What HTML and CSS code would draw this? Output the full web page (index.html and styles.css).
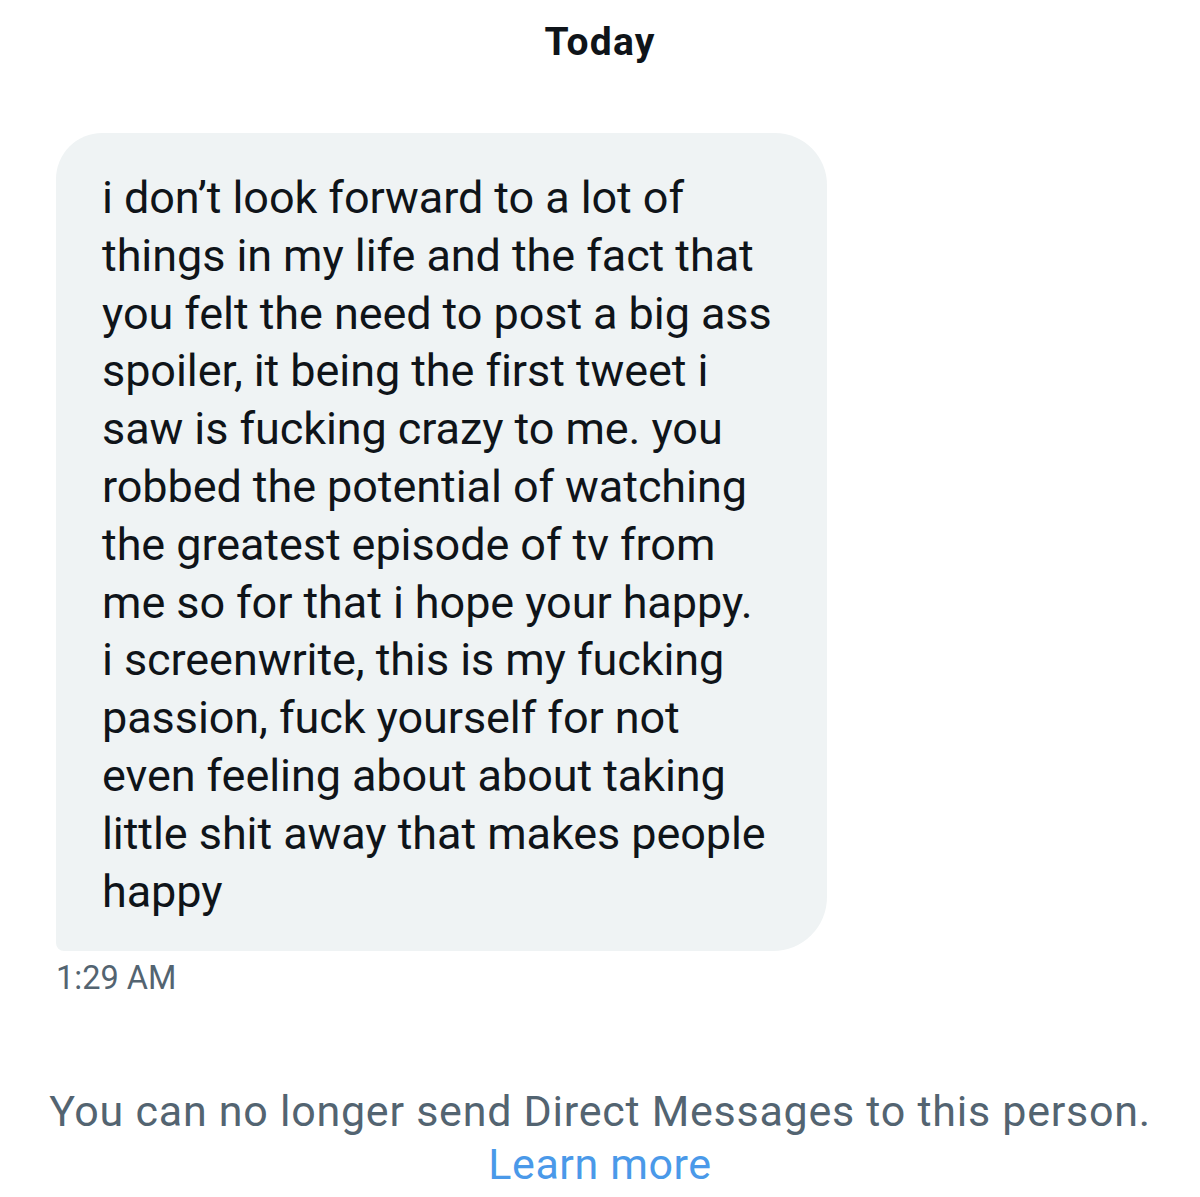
FILE: index.html
```html
<!DOCTYPE html>
<html>
<head>
<meta charset="utf-8">
<link rel="stylesheet" href="styles.css">
</head>
<body>
<div class="page">
  <div class="day">Today</div>
  <div class="thread">
    <div class="bubble">i don’t look forward to a lot of<br>things in my life and the fact that<br>you felt the need to post a big ass<br>spoiler, it being the first tweet i<br>saw is fucking crazy to me. you<br>robbed the potential of watching<br>the greatest episode of tv from<br>me so for that i hope your happy.<br>i screenwrite, this is my fucking<br>passion, fuck yourself for not<br>even feeling about about taking<br>little shit away that makes people<br>happy</div>
    <div class="time">1:29 AM</div>
  </div>
  <div class="notice">
    <div class="notice-text">You can no longer send Direct Messages to this person.</div>
    <a class="learn" href="#">Learn more</a>
  </div>
</div>
</body>
</html>
```
FILE: styles.css
```css
html, body {
  margin: 0;
  padding: 0;
  background: #ffffff;
}
body {
  font-family: Roboto, "Liberation Sans", sans-serif;
  color: #0f1419;
}
.page {
  width: 1200px;
  height: 1197px;
  overflow: hidden;
  display: flex;
  flex-direction: column;
}
.day {
  text-align: center;
  font-weight: 700;
  font-size: 39px;
  line-height: 44px;
  padding-top: 20px;
  letter-spacing: 1.2px;
  color: #0f1419;
}
.thread {
  padding: 69px 0 0 56px;
  display: flex;
  flex-direction: column;
  align-items: flex-start;
}
.bubble {
  width: 725px;
  background: #eff3f4;
  border-radius: 46px 52px 54px 8px;
  padding: 36px 0 31px 46px;
  font-size: 45px;
  line-height: 57.8px;
  letter-spacing: -0.08px;
  color: #0f1419;
  white-space: nowrap;
}
.time {
  margin-top: 7px;
  font-size: 32.5px;
  line-height: 40px;
  color: #536471;
}
.notice {
  margin-top: 87px;
  text-align: center;
  color: #536471;
  font-size: 43px;
  line-height: 53px;
}
.notice-text {
  letter-spacing: 0.75px;
}
.learn {
  color: #4a99e9;
  text-decoration: none;
  letter-spacing: 0.6px;
}
```
